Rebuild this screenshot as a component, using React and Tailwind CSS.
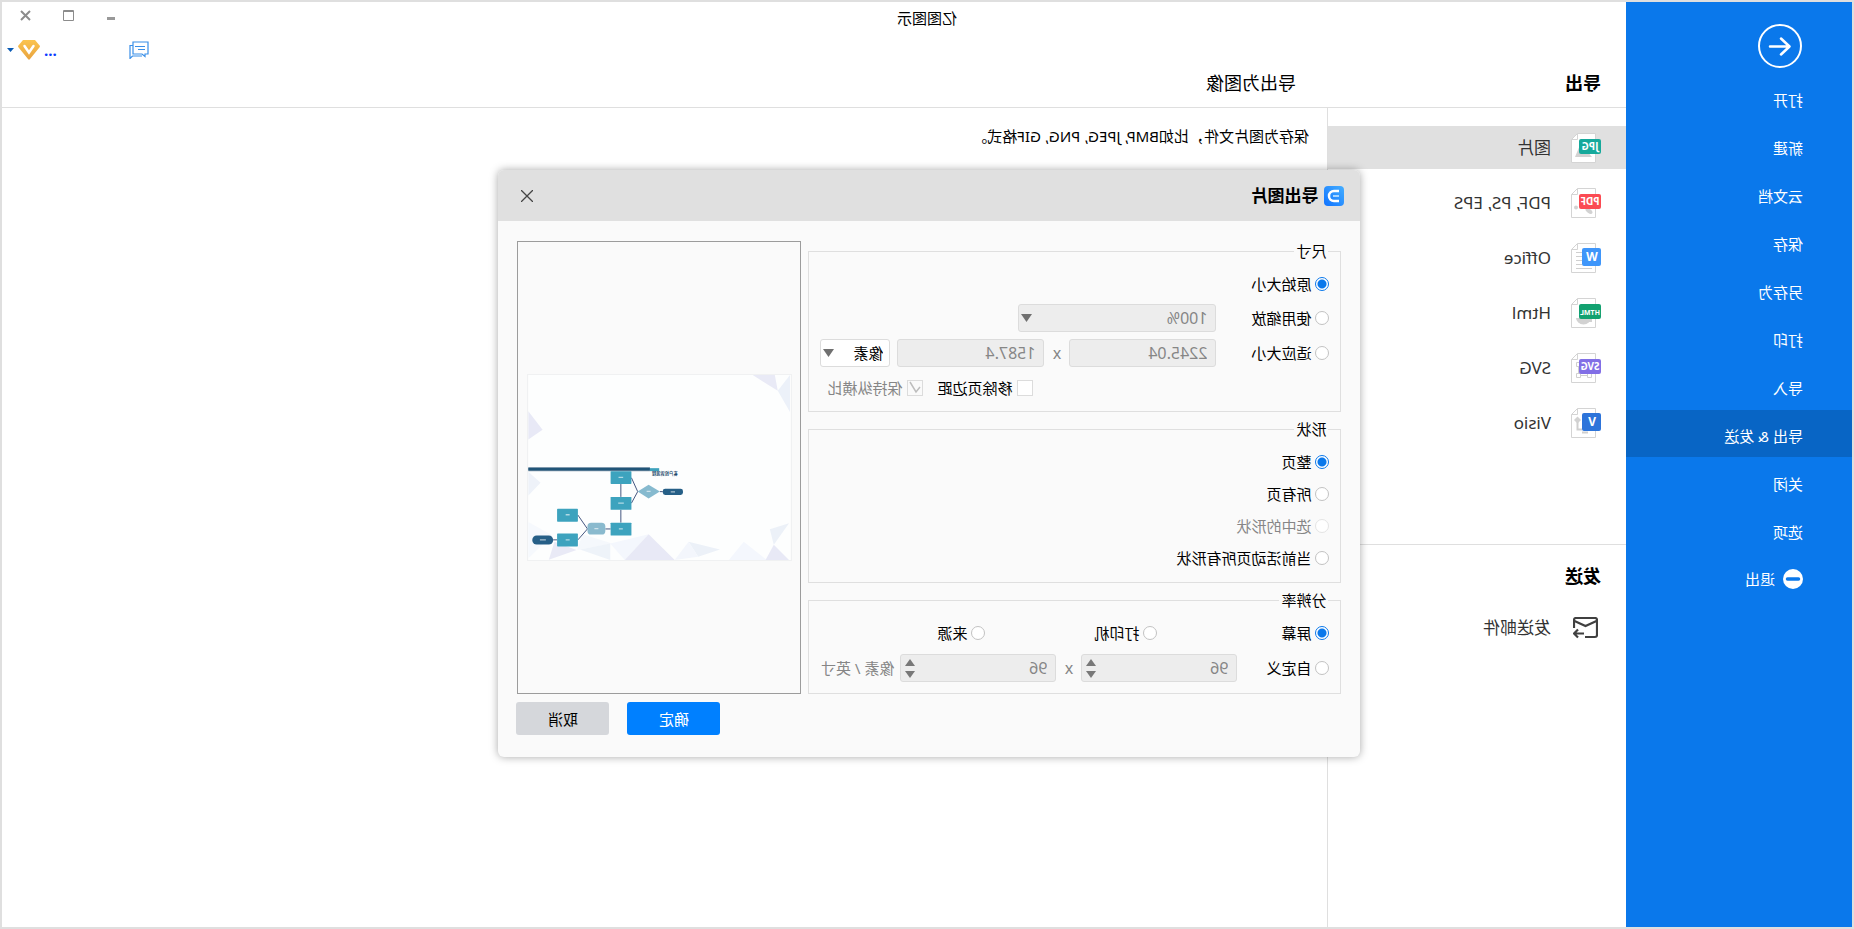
import React, { useState } from 'react'

const MENU = ['打开', '新建', '云文档', '保存', '另存为', '打印', '导入', '导出 & 发送', '关闭', '选项']

const FORMATS = [
  { id: 'jpg', name: '图片', badge: 'JPG', color: '#16a99b' },
  { id: 'pdf', name: 'PDF, PS, EPS', badge: 'PDF', color: '#fb4b53' },
  { id: 'office', name: 'Office', badge: 'W', color: '#3f96fa' },
  { id: 'html', name: 'Html', badge: 'HTML', color: '#12a170' },
  { id: 'svg', name: 'SVG', badge: 'SVG', color: '#826fe6' },
  { id: 'visio', name: 'Visio', badge: 'V', color: '#2d74da' },
]

function FileArt({ id }) {
  if (id === 'jpg') return <path d="M9 24l5-6h5l2-6 5 12z" fill="#d2d2d2" />
  if (id === 'pdf') {
    return (
      <g fill="#d2d2d2">
        <ellipse cx="12" cy="23" rx="4" ry="2" transform="rotate(-35 12 23)" />
        <circle cx="25" cy="19.500" r="2" />
      </g>
    )
  }
  if (id === 'office') return <path d="M19 9.500h6M19 13.500h6M19 17.500h6M19 21.500h6M9 25.500h16" stroke="#cfcfcf" fill="none" />
  if (id === 'html') return <path d="M10 20a7 6 0 0 0 15 0zM9 19v5h5" fill="#d2d2d2" />
  if (id === 'svg') {
    return (
      <path
        d="M9.500 20.500h4v4h-4zM20.500 20.500h4v4h-4zM13.500 22.500h7M22.500 20.500v-7M20.500 9.500h4v4h-4z"
        stroke="#cfcfcf"
        fill="none"
      />
    )
  }
  return (
    <>
      <path d="M23.500 8.500l3.500 3.500-3.500 3.500L20 12z" fill="#d2d2d2" />
      <path d="M23.500 14v7.500H19M13 24.500h6" stroke="#cfcfcf" strokeWidth="2" fill="none" />
    </>
  )
}

function FileIcon({ id, badge, color }) {
  const single = badge.length === 1
  return (
    <svg className="h-[30px] w-[30px] shrink-0" viewBox="0 0 30 30" aria-hidden="true">
      <path d="M5.500.5h18l6 6v23h-24z" fill="#fff" stroke="#d4d4d4" />
      <path d="M23.500.5v6h6" fill="none" stroke="#d4d4d4" />
      <FileArt id={id} />
      {single ? (
        <rect x="0" y="5" width="19" height="18" rx="2" fill={color} />
      ) : (
        <rect x="0" y="6" width="22" height="15" rx="2" fill={color} />
      )}
      <text
        x={single ? 9 : 11}
        y={single ? 18 : 17}
        textAnchor="middle"
        fontSize={single ? 12 : badge.length === 4 ? 7 : 10}
        fontWeight="700"
        fill="#fff"
      >
        {badge}
      </text>
    </svg>
  )
}

function Triangle({ up }) {
  return (
    <svg className="h-[7px] w-[10px]" viewBox="0 0 10 7" aria-hidden="true">
      <path d={up ? 'M5 0l5 7H0z' : 'M0 0h10L5 7z'} fill="#787878" />
    </svg>
  )
}

function Radio({ name, label, checked, onChange, disabled, className = '' }) {
  return (
    <label className={`flex items-center gap-1 ${disabled ? 'text-[#868686]' : ''} ${className}`}>
      <input
        type="radio"
        name={name}
        checked={checked}
        onChange={onChange}
        disabled={disabled}
        className="m-0 h-[14px] w-[14px] shrink-0 appearance-none rounded-full border border-[#c2c2c2] bg-white checked:border-[#0a78eb] checked:bg-[radial-gradient(circle,#0a78eb_4px,#fff_5px)] disabled:border-[#e4e4e4]"
      />
      {label}
    </label>
  )
}

function Check({ label, checked, onChange, disabled }) {
  return (
    <label className={`flex items-center gap-1 ${disabled ? 'text-[#868686]' : ''}`}>
      <span className="grid">
        <input
          type="checkbox"
          checked={checked}
          onChange={onChange}
          disabled={disabled}
          className="col-start-1 row-start-1 m-0 h-4 w-4 appearance-none border border-[#dcdcdc] bg-white disabled:bg-[#fafafa]"
        />
        {checked && (
          <svg className="pointer-events-none col-start-1 row-start-1 h-4 w-4" viewBox="0 0 16 16" aria-hidden="true">
            <path d="M3 7l4 5 6-10" fill="none" stroke="#bdbdbd" strokeWidth="1.500" />
          </svg>
        )}
      </span>
      {label}
    </label>
  )
}

function Group({ title, children, className = '' }) {
  return (
    <fieldset className={`min-w-0 border border-[#dfdfdf] pl-[11px] ${className}`}>
      <legend className="ml-px px-[2px] leading-5">{title}</legend>
      {children}
    </fieldset>
  )
}

function Drop({ label, options, disabled, className }) {
  return (
    <span className={`grid items-center ${className}`}>
      <select
        aria-label={label}
        disabled={disabled}
        className="col-start-1 row-start-1 h-7 w-full appearance-none rounded-[3px] border border-[#dcdcdc] bg-white pl-[6px] opacity-100 disabled:bg-[#ededed] disabled:pl-2 disabled:text-base disabled:text-[#868686]"
      >
        {options.map(o => <option key={o}>{o}</option>)}
      </select>
      <svg
        className="pointer-events-none col-start-1 row-start-1 mr-[3px] h-2 w-[11px] justify-self-end"
        viewBox="0 0 11 8"
        aria-hidden="true"
      >
        <path d="M0 0h11L5.500 8z" fill="#707070" />
      </svg>
    </span>
  )
}

function SizeInput({ label, value }) {
  return (
    <input
      aria-label={label}
      defaultValue={value}
      disabled
      className="h-7 w-[147px] rounded-[3px] border border-[#dcdcdc] bg-[#ededed] pl-2 text-base text-[#868686]"
    />
  )
}

function Spinner({ label, value }) {
  return (
    <span className="flex h-7 w-[156px] items-center rounded-[3px] border border-[#dcdcdc] bg-[#ededed] pr-1">
      <input
        aria-label={label}
        defaultValue={value}
        disabled
        className="h-full min-w-0 flex-1 bg-transparent pl-2 text-base text-[#868686]"
      />
      <span className="flex flex-col gap-[5px]">
        <button type="button" disabled aria-label={`${label} +`}><Triangle up /></button>
        <button type="button" disabled aria-label={`${label} -`}><Triangle /></button>
      </span>
    </span>
  )
}

// Thumbnail of the flowchart page that is going to be exported
function Preview() {
  return (
    <svg className="h-[187px] w-[265px] border border-[#f0f1f2]" viewBox="0 0 794 560" role="img" aria-label="预览">
      <rect width="794" height="560" fill="#fdfefe" />
      <path d="M115 0H48l-9 48z" fill="#e9eaf6" />
      <path d="M39 48L2 0v112z" fill="#ecf1f9" />
      <path d="M794 110l-43 56 43 29z" fill="#e8e9f6" />
      <path d="M794 293l-37 33 37 39z" fill="#eef2f9" />
      <path d="M794 445l-72 40 72 70z" fill="#f6f9fd" />
      <path d="M630 482l-90 28 106 20z" fill="#f5f8fc" />
      <path d="M546 510l92 18-92 32z" fill="#eef3f9" />
      <path d="M430 482l116 28-44 50z" fill="#f4f7fd" />
      <path d="M351 560l79-78 72 78z" fill="#e8e9f6" />
      <path d="M732 559l-17-54-67 25z" fill="#e9eaf6" />
      <path d="M309 505l-95 23 66 22z" fill="#ecf1f8" />
      <path d="M309 505l-29 45 71 10z" fill="#f3f6fc" />
      <path d="M187 560l-45-55-70 55z" fill="#f4f7fd" />
      <path d="M76 560l-25-46-46 46z" fill="#e8e9f6" />
      <path d="M63 467L5 449l46 65z" fill="#ecf1f8" />

      <path d="M426 279h368v12H426z" fill="#8299ab" />
      <path d="M426 281h368v8H426z" fill="#205578" />
      <path d="M398 282h28v9h-28z" fill="#3ea2bd" />
      <text x="381" y="304" textAnchor="middle" fontSize="13" fontWeight="700" fill="#1d4c6e">客户投诉流程</text>

      <path
        d="M387 353h9M463 353l19-42M463 353l19 35M514 330v39M514 408v39M545 466h16M615 466l29-42M615 466l29 33M707 499h12"
        fill="none"
        stroke="#44557f"
        strokeWidth="3"
      />
      <rect x="326" y="344" width="61" height="19" rx="7" fill="#265f87" />
      <path d="M396 353l34-21 33 21-33 21z" fill="#86bacf" />
      <g fill="#3da3be">
        <rect x="482" y="291" width="63" height="39" rx="2" />
        <rect x="482" y="369" width="63" height="39" rx="2" />
        <rect x="482" y="447" width="63" height="39" rx="2" />
        <rect x="644" y="405" width="63" height="39" rx="2" />
        <rect x="644" y="480" width="63" height="39" rx="2" />
      </g>
      <rect x="561" y="447" width="54" height="36" rx="11" fill="#8abace" />
      <rect x="719" y="486" width="63" height="27" rx="13" fill="#265f87" />
      <path
        d="M350 354h13M424 352h12M507 310h14M505 388h17M508 466h12M582 465h12M669 423h12M669 499h12M741 499h18"
        stroke="#fff"
        strokeOpacity=".6"
        strokeWidth="4"
      />
    </svg>
  )
}

function ExportDialog() {
  const [size, setSize] = useState('original')
  const [shape, setShape] = useState('page')
  const [dpi, setDpi] = useState('screen')
  const [trim, setTrim] = useState(false)

  return (
    <section
      role="dialog"
      aria-labelledby="dialog-title"
      className="flex w-[862px] flex-col overflow-hidden rounded-md bg-[#fafafa] shadow-[0_0_8px_rgba(0,0,0,0.35)]"
    >
      <header className="flex h-[51px] items-center bg-[#e0e0e0] pr-[23px] pl-4">
        <svg className="h-5 w-5" viewBox="0 0 20 20" aria-hidden="true">
          <defs>
            <linearGradient id="logo" x1="0" y1="0" x2="1" y2="1">
              <stop offset="0" stopColor="#45aeff" />
              <stop offset="1" stopColor="#0f72ff" />
            </linearGradient>
          </defs>
          <rect width="20" height="20" rx="4" fill="url(#logo)" />
          <path d="M5 5h5a5 5 0 0 1 0 10H5" fill="none" stroke="#fff" strokeWidth="2.500" />
          <path d="M5 10h6" stroke="#a9d6ff" strokeWidth="2" />
        </svg>
        <h2 id="dialog-title" className="ml-[6px] flex-1 text-[17px] font-bold">导出图片</h2>
        <button type="button" aria-label="关闭">
          <svg className="h-3 w-3" viewBox="0 0 12 12" aria-hidden="true">
            <path d="M0 0l12 12M12 0L0 12" stroke="#444" strokeWidth="1.300" />
          </svg>
        </button>
      </header>

      <div className="flex gap-[7px] px-[19px] pt-5">
        <div className="flex min-w-0 flex-1 flex-col gap-[7px]">
          <Group title="尺寸" className="h-[171px]">
            <Radio
              name="size"
              label="原始大小"
              className="mt-[13px] h-5"
              checked={size === 'original'}
              onChange={() => setSize('original')}
            />
            <div className="mt-[10px] flex h-7 items-center">
              <Radio
                name="size"
                label="使用缩放"
                className="w-[113px]"
                checked={size === 'scale'}
                onChange={() => setSize('scale')}
              />
              <Drop label="缩放" options={['100%']} disabled className="w-[198px]" />
            </div>
            <div className="mt-[7px] flex h-7 items-center">
              <Radio
                name="size"
                label="适应大小"
                className="w-[113px]"
                checked={size === 'fit'}
                onChange={() => setSize('fit')}
              />
              <SizeInput label="宽度" value="2245.04" />
              <span className="w-[25px] text-center text-base text-[#868686]">x</span>
              <SizeInput label="高度" value="1587.4" />
              <Drop label="单位" options={['像素']} className="ml-[7px] w-[70px]" />
            </div>
            <div className="mt-[11px] mr-[18px] flex h-5 items-center justify-end gap-[15px]">
              <Check label="移除页边距" checked={trim} onChange={() => setTrim(!trim)} />
              <Check label="保持纵横比" checked disabled onChange={() => {}} />
            </div>
          </Group>

          <Group title="形状" className="h-[164px]">
            <div className="flex flex-col gap-3 pt-[13px]">
              <Radio name="shape" label="整页" className="h-5" checked={shape === 'page'} onChange={() => setShape('page')} />
              <Radio name="shape" label="所有页" className="h-5" checked={shape === 'all'} onChange={() => setShape('all')} />
              <Radio name="shape" label="选中的形状" className="h-5" disabled checked={false} onChange={() => {}} />
              <Radio
                name="shape"
                label="当前活动页所有形状"
                className="h-5"
                checked={shape === 'active'}
                onChange={() => setShape('active')}
              />
            </div>
          </Group>

          <Group title="分辨率" className="h-[104px]">
            <div className="mt-[13px] flex h-5 items-center">
              <Radio name="dpi" label="屏幕" className="w-[172px]" checked={dpi === 'screen'} onChange={() => setDpi('screen')} />
              <Radio name="dpi" label="打印机" className="w-[172px]" checked={dpi === 'printer'} onChange={() => setDpi('printer')} />
              <Radio name="dpi" label="来源" checked={dpi === 'source'} onChange={() => setDpi('source')} />
            </div>
            <div className="mt-[11px] flex h-7 items-center text-[#868686]">
              <Radio
                name="dpi"
                label="自定义"
                className="w-[92px] text-black"
                checked={dpi === 'custom'}
                onChange={() => setDpi('custom')}
              />
              <Spinner label="水平" value="96" />
              <span className="w-[25px] text-center text-base">x</span>
              <Spinner label="垂直" value="96" />
              <span className="ml-[6px]">像素 / 英寸</span>
            </div>
          </Group>
        </div>

        <div className="flex w-[284px] items-center justify-center border border-[#9c9c9c] bg-[#fafafa]">
          <Preview />
        </div>
      </div>

      <footer className="flex justify-end gap-[18px] px-[18px] pt-2 pb-[22px]">
        <button type="button" className="h-[33px] w-[93px] rounded-[3px] bg-[#0080ff] text-white">确定</button>
        <button type="button" className="h-[33px] w-[93px] rounded-[3px] bg-[#d5d7db]">取消</button>
      </footer>
    </section>
  )
}

function Sidebar() {
  return (
    <nav className="w-[226px] shrink-0 bg-[#0a78eb] text-white">
      <button type="button" aria-label="返回" className="mt-[22px] ml-[50px] block">
        <svg className="h-11 w-11" viewBox="0 0 44 44" fill="none" stroke="#fff" strokeWidth="2" aria-hidden="true">
          <circle cx="22" cy="22" r="21" />
          <path d="M32 22.500H13M21 14.500l-8.500 8 8.500 8" strokeWidth="2.500" strokeLinecap="round" strokeLinejoin="round" />
        </svg>
      </button>
      <ul className="mt-[6px]">
        {MENU.map(item => (
          <li key={item} className="mb-px">
            <a
              href="#"
              className={`flex h-[47px] items-center pt-1 pl-[49px] ${item === '导出 & 发送' ? 'bg-[#0865c5]' : ''}`}
            >
              {item}
            </a>
          </li>
        ))}
        <li>
          <a href="#" className="flex h-[47px] items-center gap-2 pt-[2px] pl-[49px]">
            <svg className="h-5 w-5" viewBox="0 0 20 20" aria-hidden="true">
              <circle cx="10" cy="10" r="10" fill="#fff" />
              <path d="M4.500 10h11" stroke="#0a78eb" strokeWidth="3.500" strokeLinecap="round" />
            </svg>
            退出
          </a>
        </li>
      </ul>
    </nav>
  )
}

function WindowBar() {
  return (
    <div className="flex h-full flex-col">
      <div className="flex justify-end gap-8 pt-2 pr-[18px]">
        <button type="button" aria-label="最小化">
          <svg className="h-[11px] w-[11px]" viewBox="0 0 11 11" aria-hidden="true">
            <path d="M2 8.500h8" stroke="#999" strokeWidth="3" />
          </svg>
        </button>
        <button type="button" aria-label="最大化">
          <svg className="h-[11px] w-[11px]" viewBox="0 0 11 11" aria-hidden="true">
            <path d="M.5.5h10v10H.5zM0 1.500h11" fill="none" stroke="#8c8c8c" />
          </svg>
        </button>
        <button type="button" aria-label="关闭窗口">
          <svg className="h-[11px] w-[11px]" viewBox="0 0 11 11" aria-hidden="true">
            <path d="M1 1l9 9M10 1l-9 9" stroke="#8c8c8c" strokeWidth="2" />
          </svg>
        </button>
      </div>
      <div className="mt-[19px] flex items-center justify-end pr-[5px]">
        <button type="button" aria-label="消息" className="mr-[72px]">
          <svg className="h-[18px] w-5" viewBox="0 0 20 18" fill="none" stroke="#3a8fe8" strokeWidth="1.200" aria-hidden="true">
            <path d="M1 1h15v12H7l-3 2.500V13H1z" />
            <path d="M16 4.500h3v13L16.500 15H7M4 5.500h10M4 8.500h7" />
          </svg>
        </button>
        <button type="button" className="flex items-center gap-1" aria-label="账户">
          <span className="h-5 leading-5 font-bold text-[#0b3bff]">...</span>
          <svg className="h-5 w-[22px]" viewBox="0 0 22 20" aria-hidden="true">
            <defs>
              <linearGradient id="gem" x1="0" y1="0" x2="0" y2="1">
                <stop offset="0" stopColor="#fbc44f" />
                <stop offset="1" stopColor="#e8a33f" />
              </linearGradient>
            </defs>
            <path d="M5 0h12l5 6q0 1-1 2L12 19q-1 1.500-2 0L1 8Q0 7 0 6z" fill="url(#gem)" />
            <path d="M6.500 6l4.500 6.500L15.500 6" fill="none" stroke="#fff" strokeWidth="2.500" strokeLinecap="round" />
          </svg>
          <svg className="h-1 w-[7px]" viewBox="0 0 7 4" aria-hidden="true">
            <path d="M0 0h7L3.500 4z" fill="#0a5bb5" />
          </svg>
        </button>
      </div>
    </div>
  )
}

export default function App() {
  return (
    // the whole window is flipped left to right
    <div className="relative flex min-h-screen -scale-x-100 border-2 border-[#dfdfdf] bg-white font-['Noto_Sans','Noto_Sans_CJK_SC',sans-serif] text-[15px] leading-5 text-black">
      <Sidebar />

      <div className="flex min-w-0 flex-1 flex-col">
        <header className="grid h-[106px] shrink-0 grid-cols-[299px_1fr_226px] border-b border-[#dfdfdf]">
          <h1 className="self-end pb-[10px] pl-[25px] text-lg font-bold">导出</h1>
          <div className="flex flex-col justify-between pt-[6px] pb-[10px] pl-[31px]">
            <p className="mr-[330px] text-center">亿图图示</p>
            <h2 className="text-lg">导出为图像</h2>
          </div>
          <WindowBar />
        </header>

        <div className="flex flex-1">
          <aside className="w-[299px] shrink-0 border-r border-[#dfdfdf]">
            <ul className="flex h-[437px] flex-col gap-3 border-b border-[#dfdfdf] pt-[18px] text-[17px] text-[#333]">
              {FORMATS.map((f, i) => (
                <li key={f.id}>
                  <a href="#" className={`flex h-[43px] items-center gap-5 pl-[25px] ${i === 0 ? 'bg-[#e0e0e0]' : ''}`}>
                    <FileIcon id={f.id} badge={f.badge} color={f.color} />
                    {f.name}
                  </a>
                </li>
              ))}
            </ul>
            <h2 className="pt-[17px] pl-[25px] text-lg font-bold">发送</h2>
            <a href="#" className="mt-[27px] flex items-center gap-[22px] pl-7 text-[17px] text-[#333]">
              <svg className="h-[22px] w-[25px]" viewBox="0 0 25 22" fill="none" stroke="#404040" strokeWidth="2.200" aria-hidden="true">
                <path d="M13 20H3q-2 0-2-2V3q0-2 2-2h19q2 0 2 2v8" />
                <path d="M1.500 4L12.500 9l11-5M14 16.500h10M20 12.500l4 4-4 4" />
              </svg>
              发送邮件
            </a>
          </aside>
          <main className="flex-1 pt-[18px] pl-[18px]">
            <p>保存为图片文件，比如BMP, JPEG, PNG, GIF格式。</p>
          </main>
        </div>
      </div>

      <div className="absolute inset-0 flex items-center justify-center pr-[5px] pb-[2px]">
        <ExportDialog />
      </div>
    </div>
  )
}
